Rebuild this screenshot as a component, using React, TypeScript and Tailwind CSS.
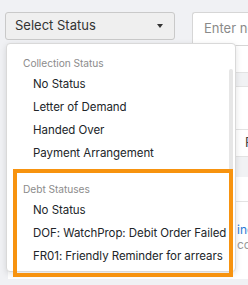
import React from "react";

export default function App() {
  const font = { fontFamily: "Inter, 'Noto Sans', sans-serif" };
  return (
    <div
      className="relative w-[248px] h-[285px] overflow-hidden bg-[#f0f1f4] text-[#212529]"
      style={font}
    >
      {/* page content */}
      <div className="flex gap-[17px] pt-[12px] pl-[5px]">
        <button className="flex h-[28px] w-[170px] shrink-0 items-center justify-between rounded-[3px] border border-[#c9c9c9] bg-[#efefef] pl-[9px] pr-[11px] text-[13px] text-[#333]">
          <span>Select Status</span>
          <span className="h-0 w-0 border-x-[3.5px] border-t-[4px] border-x-transparent border-t-[#333]" />
        </button>
        <div className="flex h-[34px] w-[120px] shrink-0 items-center rounded-l-[3px] border border-r-0 border-[#d6d6d6] bg-white pl-[11px] text-[13px] text-[#8a8a8a]">
          Enter notes
        </div>
      </div>
      <div className="ml-[8px] flex h-[233px] flex-col bg-white">
        <div className="h-[26px]" />
        <div className="h-[15px] border-y border-[#e3e3e3] bg-[#f1f2f4]" />
        <div className="h-[42px]" />
        <div className="flex h-[28px] items-center border-y border-[#e3e3e3] pl-[237px] text-[13px] text-[#444]">
          F
        </div>
        <div className="h-[20px] bg-[#f1f2f4]" />
        <div className="h-[25px] border-b border-[#e3e3e3]" />
        <div className="flex flex-col pl-[229px] pt-[20px] text-[12px] leading-[15px]">
          <span className="text-[#2b7bd6]">incl</span>
          <span className="text-[#9a9a9a]">cor</span>
        </div>
      </div>
      <div className="flex items-center pt-[2px] text-[12px]">
        <span className="ml-[14px] h-[16px] w-[17px] rounded-full bg-[#3d8fd9]" />
        <span className="ml-[61px] text-[#444]">/</span>
        <span className="ml-[70px] text-[#2b7bd6]">SHA001-U4 Gl</span>
      </div>

      {/* dropdown menu */}
      <div className="absolute left-[6px] top-[43px] h-[229px] w-[230px] overflow-hidden rounded-[4px] border border-[#d9d9d9] bg-white shadow-[0_2px_6px_rgba(0,0,0,0.12)]">
        <div className="absolute right-[2px] top-[25px] h-[110px] w-[4px] rounded-full bg-[#e6e6e6]" />
        <div className="flex flex-col pt-[10px] text-[11.5px] tracking-[-0.05px]">
          <div className="h-[18px] pl-[16px] text-[10.2px] leading-[18px] text-[#8c8c8c]">Collection Status</div>
          <div className="mt-[1px] flex flex-col pl-[26px]">
            <div className="h-[23px] leading-[23px]">No Status</div>
            <div className="h-[23px] leading-[23px]">Letter of Demand</div>
            <div className="h-[23px] leading-[23px]">Handed Over</div>
            <div className="h-[23px] leading-[23px]">Payment Arrangement</div>
          </div>
          <div className="mt-[15px] h-[18px] pl-[16px] text-[10.2px] leading-[18px] text-[#8c8c8c]">Debt Statuses</div>
          <div className="mt-[1px] flex flex-col pl-[26px]">
            <div className="h-[23px] leading-[23px]">No Status</div>
            <div className="h-[23px] leading-[23px] whitespace-nowrap">DOF: WatchProp: Debit Order Failed</div>
            <div className="h-[23px] leading-[23px] whitespace-nowrap">FR01: Friendly Reminder for arrears</div>
          </div>
        </div>
      </div>

      {/* annotation */}
      <div className="pointer-events-none absolute left-[13px] top-[169px] h-[108px] w-[220px] border-[4px] border-[#f7930f]" />
    </div>
  );
}
